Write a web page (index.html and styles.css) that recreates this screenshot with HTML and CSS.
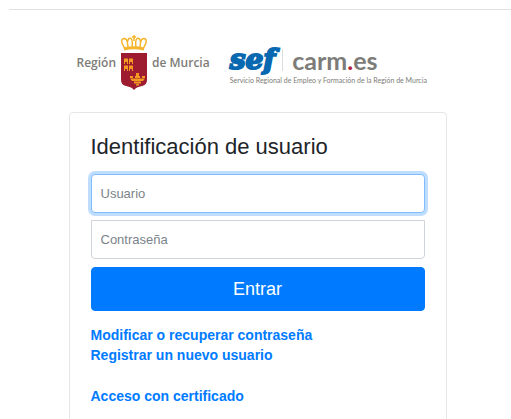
FILE: index.html
```html
<!DOCTYPE html>
<html lang="es">
<head>
  <meta charset="UTF-8" />
  <meta name="viewport" content="width=device-width, initial-scale=1" />
  <title>Identificación de usuario</title>
  <link rel="stylesheet" href="styles.css">
</head>
<body>
  <hr class="top-line" />

  <main class="page">
    <div class="login">
      <header class="logos">
        <div class="logo-region">
          <span>Región</span>
          <svg class="shield" width="28" height="56" viewBox="0 0 28 56" aria-hidden="true">
            <g fill="none" stroke="#f6b52a" stroke-width="1.5">
              <path d="M4.500 13L2 8Q1 4 4 3.500Q7 3.500 7.500 8L8 12M23.500 13L26 8Q27 4 24 3.500Q21 3.500 20.500 8L20 12" />
              <path d="M7.500 7Q8 2.500 11 3.500Q13 5 12 12M20.500 7Q20 2.500 17 3.500Q15 5 16 12M14 0V6M12 2H16" />
              <path d="M4 14Q14 11.500 24 14" stroke-width="3" />
            </g>
            <path d="M1 18H27V45Q27 50 22 51Q16 52 14 55Q12 52 6 51Q1 50 1 45Z" fill="#9d1c30" />
            <g fill="#f29a22">
              <path d="M4 29V24L5 23L6 24L7 23L8 24V29H7V27H5V29ZM9 29V24L10 23L11 24L12 23L13 24V29H12V27H10V29Z" />
              <path d="M4 36V31L5 30L6 31L7 30L8 31V36H7V34H5V36ZM9 36V31L10 30L11 31L12 30L13 31V36H12V34H10V36Z" />
              <path d="M16 38H19V41H16ZM10 41H13V43H10ZM15 41H20V43H15ZM22 41H25V43H22ZM10 43.500H25L23 46H12ZM14 46.500H21V48.500H14ZM16 49H19V50.500H16Z" />
            </g>
          </svg>
          <span>de Murcia</span>
        </div>
        <div class="logo-sef">
          <div class="brands">
            <span class="sef">sef</span>
            <span class="carm">carm<span class="dot">.</span>es</span>
          </div>
          <p class="tagline">Servicio Regional de Empleo y Formación de la Región de Murcia</p>
        </div>
      </header>

      <section class="card">
        <h1>Identificación de usuario</h1>
        <form>
          <input class="field field-user" type="text" id="usuario" placeholder="Usuario" aria-label="Usuario" autofocus />
          <input class="field field-pass" type="password" id="clave" placeholder="Contraseña" aria-label="Contraseña" />
          <button class="submit" type="submit">Entrar</button>
        </form>
        <nav class="links">
          <a href="#recuperar">Modificar o recuperar contraseña</a>
          <a href="#registro">Registrar un nuevo usuario</a>
          <a class="cert" href="#certificado">Acceso con certificado</a>
        </nav>
      </section>
    </div>
  </main>
</body>
</html>
```

FILE: styles.css
```css
* {
  box-sizing: border-box;
}

body {
  margin: 0;
  padding: 9px 0 0 9px;
  background: #fff;
  color: #212529;
  font-family: "Liberation Sans", Arial, sans-serif;
  font-size: 14px;
}

.top-line {
  margin: 0;
  border: 0;
  border-top: 1px solid #e1e1e1;
}

.page {
  padding: 26px 5px 0 0;
}

.login {
  max-width: 378px;
  margin: 0 auto;
}

/* Logos */
.logos {
  display: flex;
  align-items: center;
  gap: 20px;
  height: 58px;
  padding-left: 8px;
  color: #7d7c78;
  white-space: nowrap;
}

.logo-region {
  display: flex;
  align-items: center;
  gap: 4px;
  padding-bottom: 4px;
  font-family: "Open Sans", sans-serif;
  font-size: 12px;
  font-weight: 600;
  line-height: 16px;
}

.shield {
  flex: none;
}

.logo-sef {
  font-family: Lato, sans-serif;
  font-weight: 700;
}

.brands {
  display: flex;
  align-items: center;
  height: 30px;
}

.sef {
  padding-right: 7px;
  border-right: 1px solid #ddd;
  color: #0869b1;
  font-family: "DejaVu Serif", serif;
  font-size: 28px;
  font-style: italic;
  font-weight: bold;
  line-height: 22px;
  -webkit-text-stroke: 2px #0869b1;
}

.carm {
  padding-left: 9px;
  font-size: 25px;
  line-height: 28px;
}

.dot {
  color: #b51f3b;
}

.tagline {
  margin: 0;
  font-size: 7px;
  font-weight: 400;
  line-height: 10px;
}

/* Login card */
.card {
  margin-top: 18px;
  padding: 21px;
  border: 1px solid #e6e6e6;
  border-radius: 4px;
}

h1 {
  margin: 0 0 14px;
  font-size: 22px;
  font-weight: normal;
  line-height: 26px;
}

.field {
  display: block;
  width: 100%;
  height: 39px;
  padding: 0 9px;
  border: 1px solid #ced4da;
  background: #fff;
  color: #495057;
  font-family: inherit;
  font-size: 13px;
}

.field::placeholder {
  color: #7b838a;
}

.field:focus {
  outline: none;
}

.field-user {
  margin-bottom: 7px;
  border-color: #80bdff;
  border-radius: 4px;
  box-shadow: 0 0 0 3px #bfdeff;
}

.field-pass {
  margin-bottom: 8px;
  border-radius: 0 0 4px 4px;
}

.submit {
  display: block;
  width: 100%;
  height: 44px;
  border: 1px solid #007bff;
  border-radius: 4px;
  background: #007bff;
  color: #fff;
  font-family: inherit;
  font-size: 18px;
  cursor: pointer;
}

.submit:hover {
  background: #0069d9;
}

.links {
  display: flex;
  flex-direction: column;
  align-items: flex-start;
  margin-top: 14px;
  line-height: 20px;
}

.links a {
  color: #007bff;
  font-weight: bold;
  text-decoration: none;
}

.links a:hover {
  text-decoration: underline;
}

.links .cert {
  margin-top: 21px;
}
```
